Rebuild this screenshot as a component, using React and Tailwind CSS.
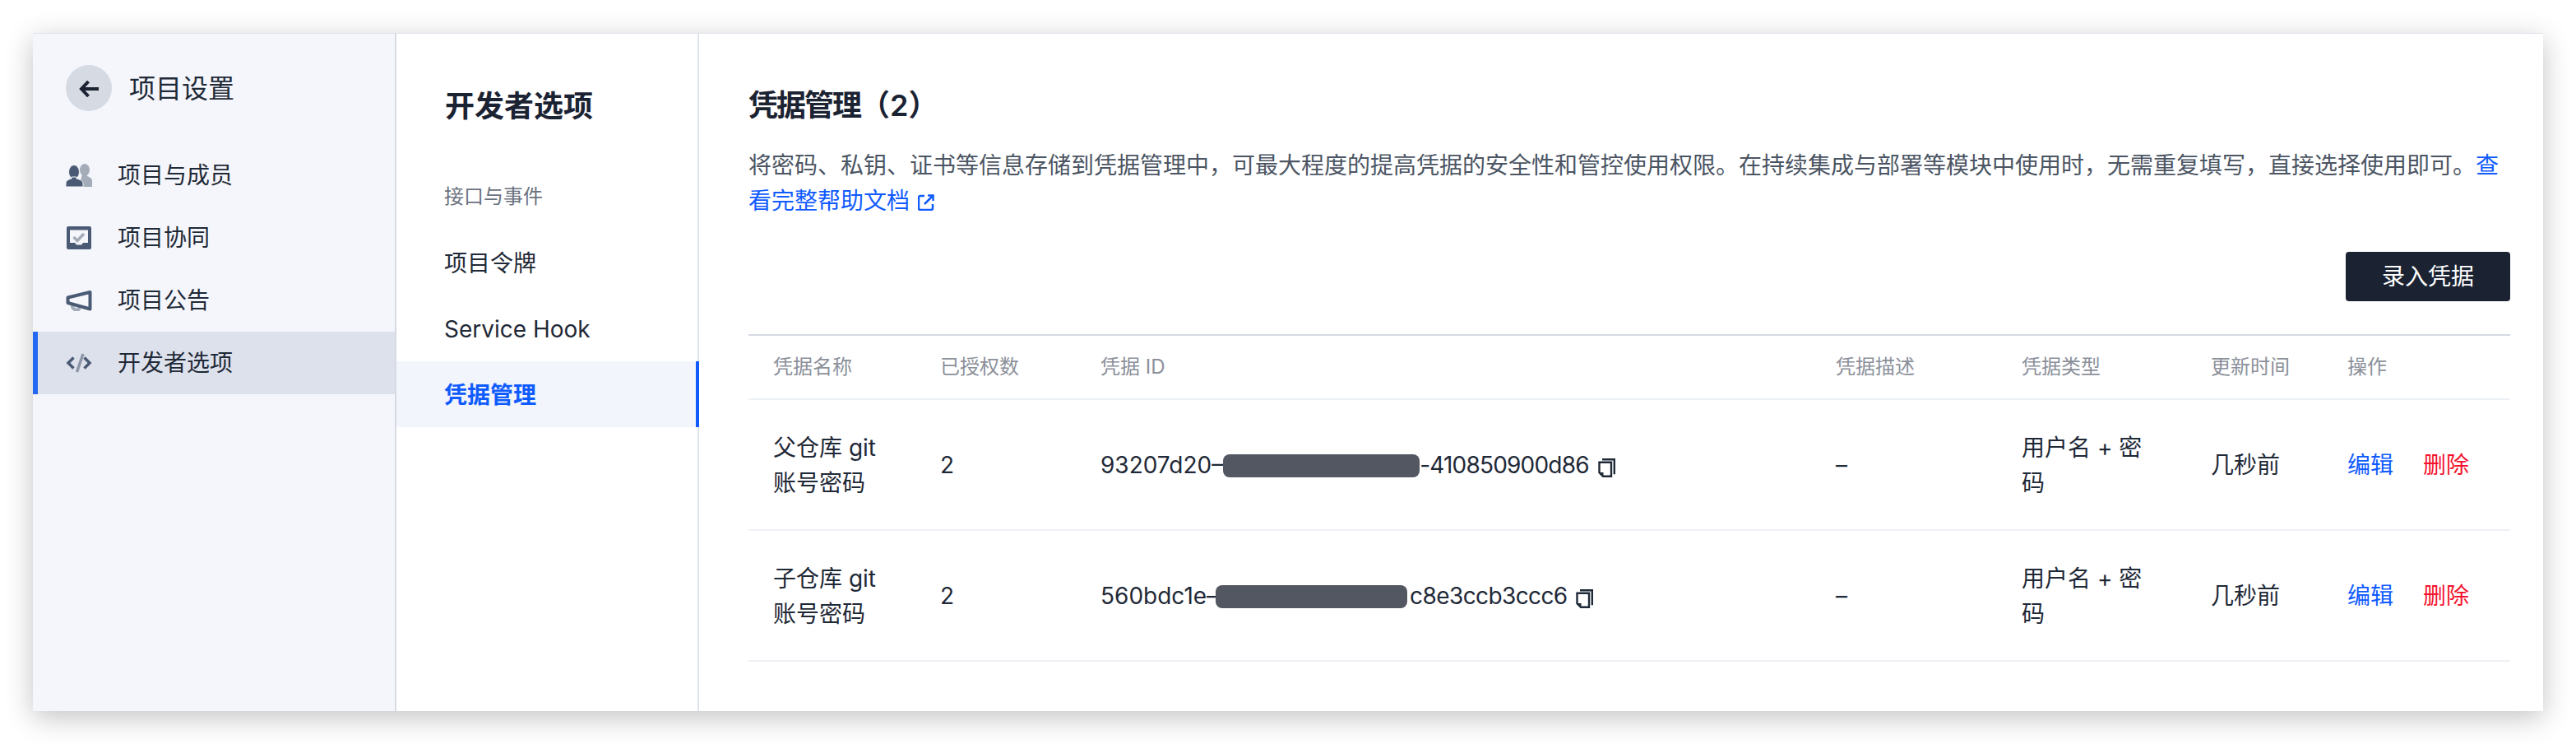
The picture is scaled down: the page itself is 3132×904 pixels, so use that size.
import React from "react";

const FONT = "[font-family:Inter,'Noto_Sans_CJK_SC',sans-serif]";

function UsersIcon() {
  return (
    <svg width="32" height="28" viewBox="0 0 32 28">
      <ellipse cx="23" cy="7.500" rx="6" ry="7.500" fill="#a5acb9" />
      <path d="M20 13h6v2c3 1.500 6 2.500 6 5.500V28H18v-8z" fill="#a5acb9" />
      <ellipse cx="10" cy="10" rx="6.500" ry="8.500" fill="#4b5a74" stroke="#f4f6fb" strokeWidth="1" />
      <path d="M7 16h6v2c4 1 8 2.500 8 6v4H0v-4c0-3.500 3-5 7-6z" fill="#4b5a74" stroke="#f4f6fb" strokeWidth="1" />
    </svg>
  );
}

function CheckIcon() {
  return (
    <svg width="30" height="28" viewBox="0 0 30 28">
      <path d="M2 0h26a2 2 0 0 1 2 2v24a2 2 0 0 1-2 2H2a2 2 0 0 1-2-2V2a2 2 0 0 1 2-2z" fill="#4b5a74" />
      <path d="M4 4.500h22v15.500h-6l-2 2.500h-6l-2-2.500H4z" fill="#f4f6fb" />
      <path d="M8.500 13l4.500 4.500L21 9" fill="none" stroke="#a5acb9" strokeWidth="3.500" />
    </svg>
  );
}

function MegaphoneIcon() {
  return (
    <svg width="32" height="26" viewBox="0 0 32 26">
      <path d="M8 19a5 5 0 0 0 9 3.500" fill="none" stroke="#a5acb9" strokeWidth="4" />
      <path d="M2.500 9.500L29.500 3v20.500L2.500 16z" fill="none" stroke="#4b5a74" strokeWidth="4" strokeLinejoin="round" />
    </svg>
  );
}

function CodeIcon() {
  return (
    <svg width="32" height="26" viewBox="0 0 32 26">
      <path d="M9.500 6.500L3 13l6.500 6.500M22.500 6.500L29 13l-6.500 6.500" fill="none" stroke="#4b5a74" strokeWidth="3.500" />
      <path d="M21 2l-7.500 22" fill="none" stroke="#8e96a5" strokeWidth="3.500" />
    </svg>
  );
}

function CopyIcon() {
  return (
    <svg width="21" height="23" viewBox="0 0 21 23" className="inline-block align-[-5px] ml-2">
      <path d="M5 1.200h14.800v18" fill="none" stroke="#1f2937" strokeWidth="2.400" />
      <path d="M1.500 4.800h14.500v17H6l-4.500-4.500z" fill="none" stroke="#1f2937" strokeWidth="2.400" />
      <path d="M2 17h4.500v4z" fill="#1f2937" />
    </svg>
  );
}

function LinkIcon() {
  return (
    <svg width="20" height="20" viewBox="0 0 20 20" className="inline-block align-[-2px] ml-[10px]">
      <path d="M8 2H3a2 2 0 0 0-2 2v13a2 2 0 0 0 2 2h13a2 2 0 0 0 2-2v-5" fill="none" stroke="#0f5bff" strokeWidth="2.500" />
      <path d="M12 1.500h6.500V8M18.500 1.500L8 12" fill="none" stroke="#0f5bff" strokeWidth="2.500" />
    </svg>
  );
}

const sideItems = [
  { label: "项目与成员", icon: <UsersIcon /> },
  { label: "项目协同", icon: <CheckIcon /> },
  { label: "项目公告", icon: <MegaphoneIcon /> },
  { label: "开发者选项", icon: <CodeIcon />, active: true },
];

const rows = [
  {
    name: "父仓库 git 账号密码",
    head: "93207d20–",
    tail: "-410850900d86",
    mask: "w-[239px]",
    tailClass: "pr-[3px] tracking-[-0.8px]",
  },
  {
    name: "子仓库 git 账号密码",
    head: "560bdc1e–",
    tail: "c8e3ccb3ccc6",
    mask: "w-[233px] -ml-[3px]",
    tailClass: "ml-[3px] pr-[2px] tracking-[-0.6px]",
  },
];

const heads = ["凭据名称", "已授权数", "凭据 ID", "凭据描述", "凭据类型", "更新时间", "操作"];

export default function App() {
  return (
    <div className={`w-[3132px] h-[904px] bg-white pt-10 pl-10 overflow-hidden ${FONT}`}>
      <div className="w-[3052px] h-[824px] flex bg-white border-t border-[#dfe3ec] shadow-[0_8px_32px_rgba(0,0,0,0.24)]">
        {/* SIDEBAR */}
        <div className="w-[442px] shrink-0 bg-[#f4f6fb] border-r-2 border-[#d5dae3]">
          <div className="flex items-center pl-10 pt-[38px] pb-10 h-[134px]">
            <div className="w-14 h-14 rounded-full bg-[#d5dae3] flex items-center justify-center">
              <svg width="24" height="22" viewBox="0 0 24 22" className="mt-[2px]">
                <path d="M11.500 2L3 11l8.500 9M3.500 11H24" fill="none" stroke="#1b2333" strokeWidth="4" />
              </svg>
            </div>
            <span className="ml-[21px] mt-[2px] text-[32px] text-[#1f2937]">项目设置</span>
          </div>
          {sideItems.map((item) => (
            <div
              key={item.label}
              className={`h-[76px] flex items-center text-[28px] text-[#1f2937] ${
                item.active ? "bg-[#dde1ec] border-l-[6px] border-[#2468f2] pl-[34px]" : "pl-10"
              }`}
            >
              <span className="w-8 flex justify-center">{item.icon}</span>
              <span className="ml-[31px]">{item.label}</span>
            </div>
          ))}
        </div>

        {/* SECOND MENU */}
        <div className="w-[368px] shrink-0 border-r-2 border-[#dfe3ec]">
          <h2 className="pl-[59px] pt-[64px] h-[182px] text-[36px] leading-[48px] font-semibold text-[#1b2333]">开发者选项</h2>
          <div className="pl-[58px] h-[41px] text-2xl leading-8 text-[#6b7280]">接口与事件</div>
          <div className="h-[80px] mt-[15px] pl-[58px] pt-[2px] flex items-center text-[28px] text-[#1f2937]">项目令牌</div>
          <div className="h-[80px] pl-[58px] pt-[2px] flex items-center text-[28px] text-[#1f2937]">Service Hook</div>
          <div className="h-[80px] pl-[58px] pt-[2px] mr-[-2px] flex items-center text-[28px] font-semibold text-[#0f5bff] bg-[#f2f5fb] border-r-4 border-[#0f5bff]">凭据管理</div>
        </div>

        {/* CONTENT */}
        <div className="flex-1 pl-[60px] pr-10 pt-[63px]">
          <h1 className="text-[36px] leading-[48px] font-semibold text-[#1b2333]">
            <span className="tracking-[-2px]">凭据管理</span>（2）
          </h1>
          <p className="mt-[28px] text-[28px] leading-[43px] text-[#4b5563]">
            将密码、私钥、证书等信息存储到凭据管理中，可最大程度的提高凭据的安全性和管控使用权限。在持续集成与部署等模块中使用时，无需重复填写，直接选择使用即可。
            <a className="text-[#0f5bff]">查看完整帮助文档<LinkIcon /></a>
          </p>
          <div className="flex justify-end mt-[40px]">
            <button className="w-[200px] h-[60px] rounded bg-[#1b2333] text-white text-[28px]">录入凭据</button>
          </div>
          <table className="w-full mt-10 table-fixed border-t-2 border-[#d5dae3] text-[28px] leading-[43px] text-[#1f2937]">
            <colgroup>
              <col className="w-[203px]" />
              <col className="w-[195px]" />
              <col className="w-[894px]" />
              <col className="w-[226px]" />
              <col className="w-[230px]" />
              <col className="w-[166px]" />
              <col className="w-[228px]" />
            </colgroup>
            <thead>
              <tr className="h-[78px] border-b-2 border-[#edf0f5]">
                {heads.map((h) => (
                  <th key={h} className="px-[30px] text-left text-2xl font-normal text-[#8b909a]">{h}</th>
                ))}
              </tr>
            </thead>
            <tbody>
              {rows.map((r) => (
                <tr key={r.head} className="h-[159px] border-b-2 border-[#edf0f5]">
                  <td className="px-[30px] pt-[2px]">{r.name}</td>
                  <td className="px-[30px] pt-[2px]">2</td>
                  <td className="px-[30px] pt-[2px] whitespace-nowrap">
                    {r.head}
                    <span className={`relative z-10 inline-block h-7 align-[-5px] rounded-lg bg-[#535762] ${r.mask}`}></span>
                    <span className={`inline-block ${r.tailClass}`}>{r.tail}</span>
                    <CopyIcon />
                  </td>
                  <td className="px-[30px] pt-[2px]">–</td>
                  <td className="px-[30px] pt-[2px]">用户名 + 密码</td>
                  <td className="px-[30px] pt-[2px]">几秒前</td>
                  <td className="px-[30px] pt-[2px] whitespace-nowrap">
                    <a className="text-[#0f5bff]">编辑</a>
                    <a className="ml-9 text-[#f5122d]">删除</a>
                  </td>
                </tr>
              ))}
            </tbody>
          </table>
        </div>
      </div>
    </div>
  );
}
